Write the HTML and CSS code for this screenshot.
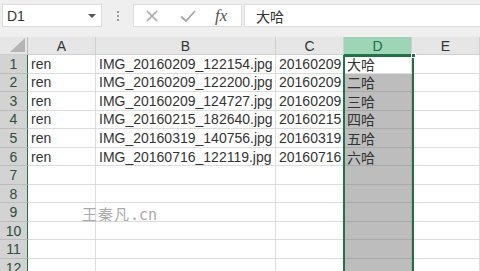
FILE: index.html
```html
<!DOCTYPE html>
<html>
<head>
<meta charset="utf-8">
<link rel="stylesheet" href="styles.css">
</head>
<body>
<div class="app">
  <div class="toolbar">
    <div class="namebox"><span class="ref">D1</span><span class="caret"></span></div>
    <div class="grip"><i></i><i></i><i></i></div>
    <div class="fxbox">
      <svg class="ico" width="16" height="16" viewBox="0 0 16 16"><path d="M3 3 L13 13 M13 3 L3 13" stroke="#a6a6a6" stroke-width="1.6" fill="none"/></svg>
      <svg class="ico" width="18" height="16" viewBox="0 0 18 16"><path d="M2 8.5 L7 13 L16 3" stroke="#a6a6a6" stroke-width="1.8" fill="none"/></svg>
      <span class="fx">fx</span>
    </div>
    <div class="formula">大哈</div>
  </div>
  <div class="sheet">
    <div class="grid">
      <div class="ch corner"><span class="tri"></span></div>
      <div class="ch">A</div><div class="ch">B</div><div class="ch">C</div><div class="ch sel">D</div><div class="ch">E</div>

      <div class="rh">1</div><div class="c">ren</div><div class="c">IMG_20160209_122154.jpg</div><div class="c">20160209</div><div class="c cjk">大哈</div><div class="c"></div>
      <div class="rh">2</div><div class="c">ren</div><div class="c">IMG_20160209_122200.jpg</div><div class="c">20160209</div><div class="c cjk g">二哈</div><div class="c"></div>
      <div class="rh">3</div><div class="c">ren</div><div class="c">IMG_20160209_124727.jpg</div><div class="c">20160209</div><div class="c cjk g">三哈</div><div class="c"></div>
      <div class="rh">4</div><div class="c">ren</div><div class="c">IMG_20160215_182640.jpg</div><div class="c">20160215</div><div class="c cjk g">四哈</div><div class="c"></div>
      <div class="rh">5</div><div class="c">ren</div><div class="c">IMG_20160319_140756.jpg</div><div class="c">20160319</div><div class="c cjk g">五哈</div><div class="c"></div>
      <div class="rh">6</div><div class="c">ren</div><div class="c">IMG_20160716_122119.jpg</div><div class="c">20160716</div><div class="c cjk g">六哈</div><div class="c"></div>
      <div class="rh">7</div><div class="c"></div><div class="c"></div><div class="c"></div><div class="c g"></div><div class="c"></div>
      <div class="rh">8</div><div class="c"></div><div class="c"></div><div class="c"></div><div class="c g"></div><div class="c"></div>
      <div class="rh">9</div><div class="c"></div><div class="c"></div><div class="c"></div><div class="c g"></div><div class="c"></div>
      <div class="rh">10</div><div class="c"></div><div class="c"></div><div class="c"></div><div class="c g"></div><div class="c"></div>
      <div class="rh">11</div><div class="c"></div><div class="c"></div><div class="c"></div><div class="c g"></div><div class="c"></div>
      <div class="rh">12</div><div class="c"></div><div class="c"></div><div class="c"></div><div class="c g"></div><div class="c"></div>
    </div>
    <div class="selbox"><span class="handle"></span></div>
    <div class="watermark">王秦凡<span class="wm-lat">.cn</span></div>
  </div>
</div>
</body>
</html>
```
FILE: styles.css
```css
* { box-sizing: border-box; }
html, body { margin: 0; padding: 0; }
body {
  width: 480px; height: 271px; overflow: hidden;
  font-family: "Liberation Sans", Arial, "Noto Sans CJK SC", sans-serif;
  background: #fff;
}
.app { width: 480px; height: 271px; display: flex; flex-direction: column; }
.toolbar {
  height: 37px; flex: none;
  background: #efefef;
  display: flex; align-items: flex-start;
  padding-top: 4px; padding-left: 2px;
}
.namebox {
  width: 100px; height: 23px;
  background: #fff; border: 1px solid #dcdcdc;
  display: flex; align-items: center; justify-content: space-between;
  padding: 0 5px 0 4px;
  font-size: 14px; color: #333;
}
.caret {
  width: 0; height: 0;
  border-left: 4px solid transparent; border-right: 4px solid transparent;
  border-top: 4px solid #555;
}
.grip {
  width: 31px; height: 23px;
  display: flex; flex-direction: column; align-items: center; justify-content: center; gap: 2px;
}
.grip i { display: block; width: 2px; height: 2px; background: #9a9a9a; }
.fxbox {
  width: 109px; height: 23px;
  background: #fff; border: 1px solid #dcdcdc;
  display: flex; align-items: center;
  padding-left: 10px; gap: 19px;
}
.ico { display: block; flex: none; }
.fx {
  font-family: "Liberation Serif", "Times New Roman", serif;
  font-style: italic; font-size: 17px; color: #555;
  margin-left: -1px;
}
.formula {
  flex: 1; height: 23px; margin-left: 2px;
  background: #fff; border: 1px solid #dcdcdc; border-right: none;
  padding-left: 11px;
  display: flex; align-items: center;
  font-family: "Noto Sans CJK SC", sans-serif; font-size: 14px; color: #333;
}
.sheet { position: relative; flex: 1; overflow: hidden; }
.grid {
  display: grid;
  grid-template-columns: 28px 68px 180px 68px 68px 68px;
  grid-template-rows: 18px;
  grid-auto-rows: 18.55px;
}
.ch {
  background: #e6e6e6;
  border-right: 1px solid #cfcfcf;
  border-bottom: 1px solid #cfcfcf;
  display: flex; align-items: center; justify-content: center;
  font-size: 14px; color: #333;
}
.ch.sel { background: #9fd5b7; color: #1e6b3f; border-bottom: 1px solid #217346; }
.corner { position: relative; border-right: 1px solid #bdbdbd; }
.tri {
  position: absolute; right: 2px; bottom: 2px;
  width: 15px; height: 14px;
  background: #b4b4b4;
  clip-path: polygon(100% 0, 100% 100%, 0 100%);
}
.rh {
  background: #d3d3d3;
  border-right: 1px solid #217346;
  border-bottom: 1px solid #bcbcbc;
  display: flex; align-items: center; justify-content: center;
  font-size: 14px; color: #2c4f3b;
}
.c {
  border-right: 1px solid #dcdcdc;
  border-bottom: 1px solid #dcdcdc;
  padding-left: 3px;
  display: flex; align-items: center;
  font-size: 14px; color: #333;
  white-space: nowrap; overflow: hidden;
}
.cjk { font-family: "Noto Sans CJK SC", sans-serif; padding-left: 3px; }
.g { background: #bdbdbd; border-bottom-color: #a9a9a9; border-right-color: #a9a9a9; }
.selbox {
  position: absolute; left: 343px; top: 18px; width: 71px; bottom: -4px;
  border: 2px solid #217346;
}
.handle {
  position: absolute; right: -4px; top: -4px;
  width: 5px; height: 5px; background: #217346; border: 1px solid #fff;
}
.watermark {
  position: absolute; left: 82px; top: 166px;
  font-family: "Noto Sans CJK SC", serif; font-size: 15px; color: #a9a9a9;
  letter-spacing: 1px;
}
.wm-lat { font-family: "DejaVu Sans Mono", monospace; font-size: 15px; letter-spacing: 0; }
```
